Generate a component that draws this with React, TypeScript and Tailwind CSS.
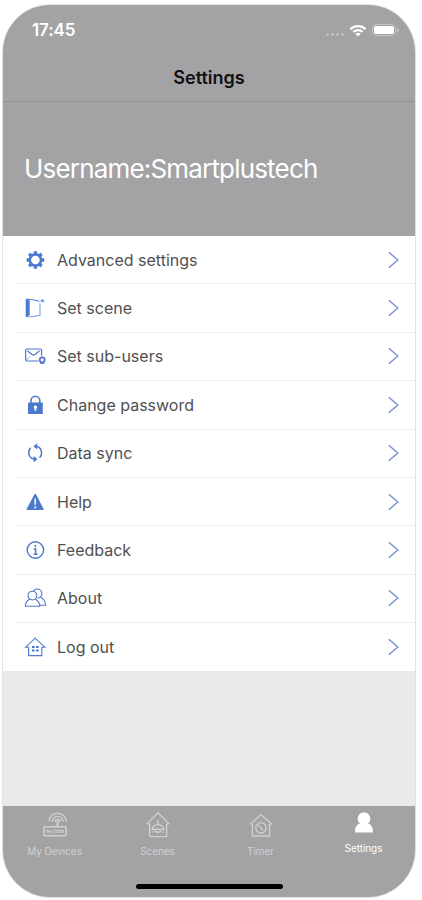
import type { ReactNode } from 'react';

const GearIcon = () => (
    <svg viewBox="0 0 24 24" className="w-6 h-6" fill="none" stroke="currentColor">
        <circle cx="12.4" cy="12" r="5.6" strokeWidth="2.6" />
        <g strokeWidth="3.4">
            <path d="M12.4 3.2v2.600M12.4 18.200v2.600M3.6 12h2.600M18.600 12h2.600" />
            <path d="M6.200 5.800l1.800 1.800M16.800 16.400l1.800 1.800M18.600 5.800l-1.800 1.800M8 16.400l-1.800 1.800" />
        </g>
    </svg>
);

const SceneIcon = () => (
    <svg viewBox="0 0 24 24" className="w-6 h-6" fill="none" stroke="currentColor">
        <path d="M3 3L6.400 4.600v14.600L3 21z" fill="currentColor" strokeWidth="0.6" />
        <path d="M4 3l6.400.8 5.800 1.400" strokeWidth="1" />
        <path d="M4 20.800l6-.2 7-1.400V7.600" strokeWidth="1.100" opacity="0.7" />
        <path d="M16.600 6.200l2.800-2.800 2 2.800" strokeWidth="1" opacity="0.75" />
        <path d="M18.600 3.600h1.800v2.600h-1.800z" fill="currentColor" stroke="none" opacity="0.8" />
    </svg>
);

const MailUserIcon = () => (
    <svg viewBox="0 0 24 24" className="w-6 h-6" fill="none" stroke="currentColor" strokeWidth="1.2">
        <path d="M15.500 17H4a1.400 1.400 0 0 1-1.400-1.400V6.400A1.400 1.400 0 0 1 4 5h13.200a1.400 1.400 0 0 1 1.400 1.400v5.400" />
        <path d="M4.400 6.800l4.600 3.600q1.500 1 3 0l4.600-3.600" />
        <path d="M3.400 16.200l3.600-3.800" strokeWidth="0.7" />
        <circle cx="19.200" cy="15.800" r="2.500" strokeWidth="1.700" />
        <path d="M17.400 18.400v1h3.600v-1" strokeWidth="1" />
    </svg>
);

const LockIcon = () => (
    <svg viewBox="0 0 24 24" className="w-6 h-6" fill="currentColor">
        <path d="M8 11V7.600a4.400 4.400 0 0 1 8.800 0V11" fill="none" stroke="currentColor" strokeWidth="1.6" />
        <rect x="5" y="9.600" width="14.800" height="11.400" rx="0.6" />
        <path d="M12.400 12.600a1.700 1.700 0 0 1 .8 3.200v1.900h-1.600v-1.900a1.700 1.700 0 0 1 .8-3.200z" fill="#fff" />
    </svg>
);

const SyncIcon = () => (
    <svg viewBox="0 0 24 24" className="w-6 h-6" fill="none" stroke="currentColor" strokeWidth="1.5">
        <path d="M7.600 6.800a7 7 0 0 0 .8 10.400l3.200.9" />
        <path d="M13.200 5.200l3 1.200a7 7 0 0 1 .4 10.200" />
        <path d="M10.400 5.200l3.800-3v6.400z" fill="currentColor" stroke="none" />
        <path d="M14.400 18l-3.800-3v6.400z" fill="currentColor" stroke="none" />
    </svg>
);

const WarningIcon = () => (
    <svg viewBox="0 0 24 24" className="w-6 h-6" fill="currentColor">
        <path d="M12.200 4.400l7.800 15H4.200z" stroke="currentColor" strokeWidth="1.4" strokeLinejoin="round" />
        <path d="M12.200 8.600v6.200M12.200 16.200v2.200" stroke="#fff" strokeWidth="1.8" opacity="0.85" />
    </svg>
);

const InfoIcon = () => (
    <svg viewBox="0 0 24 24" className="w-6 h-6" fill="none" stroke="currentColor">
        <circle cx="12.400" cy="12" r="8.200" strokeWidth="1.400" />
        <path d="M12.400 7v2.200M10.800 11h1.800v5M10.600 16.200h4" strokeWidth="1.500" />
    </svg>
);

const PeopleIcon = () => (
    <svg viewBox="0 0 24 24" className="w-6 h-6" fill="none" stroke="currentColor" strokeWidth="1.1">
        <circle cx="9.400" cy="9.600" r="4.400" />
        <path d="M6.600 13.200c-2.400 1.200-4.200 3.400-4.200 7h14.400c0-3.600-1.800-5.800-4.600-7" />
        <path d="M10.400 5.200a4.600 4.600 0 1 1 7.400 5.400l-3.400 2" />
        <path d="M17.400 11.200c2.800 1.200 5 3.800 5.200 8h-5.800" />
    </svg>
);

const HomeIcon = () => (
    <svg viewBox="0 0 24 24" className="w-6 h-6" fill="none" stroke="currentColor" strokeWidth="1.1">
        <path d="M5.600 12.200H2.600L12.200 3.200l9.600 9h-3v8.400H5.600z" />
        <path d="M9 11h2.600v2H9zM13 11h2.600v2H13zM9 14.400h2.600v2H9zM13 14.400h2.600v2H13z" fill="currentColor" stroke="none" />
    </svg>
);

const RouterIcon = () => (
    <svg viewBox="0 0 28 28" className="w-7 h-7" fill="none" stroke="currentColor" strokeWidth="1.4">
        <path d="M8 10.400a8.600 8.200 0 0 1 17.200 0" />
        <path d="M11 10.800a5.600 5.400 0 0 1 11.200 0" />
        <path d="M13.800 11a2.800 2.600 0 0 1 5.600 0" />
        <path d="M16.600 9.600v6.400" strokeWidth="2" />
        <rect x="3" y="15.800" width="22" height="9" rx="1" strokeWidth="1.600" />
        <path d="M6 22.400v-3.600l2.600 3.400v-3.400M11 22.400v-3.600M13.400 19.400h8.800v1.800h-8.800" strokeWidth="1" />
    </svg>
);

const LampHouseIcon = () => (
    <svg viewBox="0 0 28 28" className="w-7 h-7" fill="none" stroke="currentColor" strokeWidth="1.400">
        <path d="M5.600 13.400L3.400 12.600 14 1.800l10.800 10.800-2.200.8v11.400q0 .8-1 .8H6.600q-1 0-1-.8z" />
        <path d="M14 9v4.200M8.200 18.400c.6-3 2.800-4.800 5.800-4.800s5.200 1.800 5.800 4.800z" />
        <path d="M11 19.200c.4 2.800 5.600 2.800 6 0M9.400 20.400l-1 1M18.600 20.400l1 1" />
    </svg>
);

const ClockHouseIcon = () => (
    <svg viewBox="0 0 28 28" className="w-7 h-7" fill="none" stroke="currentColor" strokeWidth="1.3">
        <path d="M5.400 13.600L3.800 12.800 14 3.600l10.400 9.200-1.800.8V25H5.400z" />
        <circle cx="14" cy="16.800" r="5.200" />
        <path d="M11 14l5.200 5" />
    </svg>
);

const PersonIcon = () => (
    <svg viewBox="0 0 28 28" className="w-7 h-7" fill="currentColor">
        <path d="M14 3.600a6.200 6.200 0 0 1 4 11c3.400 1 5 3.800 5 8.800H5c0-5 1.600-7.800 5-8.800a6.200 6.200 0 0 1 4-11z" />
    </svg>
);

const WifiIcon = () => (
    <svg viewBox="0 0 18 13" className="w-[18px] h-[13px]" fill="none" stroke="currentColor" strokeWidth="2.3">
        <path d="M1.400 5.100a11 11 0 0 1 15.200 0" />
        <path d="M4.300 8a7 7 0 0 1 9.400 0" />
        <path d="M9 12.600L6.400 9.900a3.800 3.800 0 0 1 5.200 0z" fill="currentColor" stroke="none" />
    </svg>
);

const MENU = [
    { label: 'Advanced settings', icon: GearIcon },
    { label: 'Set scene', icon: SceneIcon },
    { label: 'Set sub-users', icon: MailUserIcon },
    { label: 'Change password', icon: LockIcon },
    { label: 'Data sync', icon: SyncIcon },
    { label: 'Help', icon: WarningIcon },
    { label: 'Feedback', icon: InfoIcon },
    { label: 'About', icon: PeopleIcon },
    { label: 'Log out', icon: HomeIcon },
];

function StatusBar() {
    return (
        <div className="flex items-center justify-between h-[50px] pl-[29px] pr-[16px] text-white">
            <span className="text-[17px] leading-5 font-semibold tracking-[-0.1px]">17:45</span>
            <div className="flex items-center">
                <div className="flex gap-[2px] mt-2 mr-[5px] opacity-30">
                    <span className="w-[3px] h-[3px] rounded-full bg-white" />
                    <span className="w-[3px] h-[3px] rounded-full bg-white" />
                    <span className="w-[3px] h-[3px] rounded-full bg-white" />
                    <span className="w-[3px] h-[3px] rounded-full bg-white" />
                </div>
                <WifiIcon />
                <div className="ml-[5px] w-[24px] h-[12px] rounded-[4px] border border-white/35 p-px">
                    <div className="h-full rounded-[2px] bg-white" />
                </div>
                <div className="ml-px w-[2px] h-[4px] rounded-r bg-white/40" />
            </div>
        </div>
    );
}

function Tab({ label, active, children }: { label: string; active?: boolean; children: ReactNode }) {
    return (
        <div className={active ? 'flex-1 flex flex-col items-center text-white' : 'flex-1 flex flex-col items-center pt-[2px] text-[#d0d0d2]'}>
            {children}
            <span className={active ? 'mt-[5px] text-[10px] leading-3 tracking-[-0.05px]' : 'mt-[6px] text-[10px] leading-3 tracking-[-0.05px]'}>{label}</span>
        </div>
    );
}

export default function App() {
    return (
        <div className="w-[422px] h-[900px] bg-white pt-1 pl-[2px] font-['Inter','Liberation_Sans',sans-serif]">
            <div className="w-[414px] h-[894px] flex flex-col rounded-[48px] overflow-hidden border border-[#e2e2e3] bg-[#eaeaea]">
                <header className="h-[97px] shrink-0 bg-[#a3a3a5] border-b border-[#929294]">
                    <StatusBar />
                    <h1 className="mt-[11px] text-center text-[18px] leading-6 font-semibold text-[#111]">Settings</h1>
                </header>

                <section className="h-[134px] shrink-0 flex items-center bg-[#a3a3a5] pl-[21px] text-white">
                    <p className="text-[26px] leading-8 tracking-[-0.82px]">Username:Smartplustech</p>
                </section>

                <ul className="shrink-0 bg-white">
                    {MENU.map((item, index) => {
                        const Icon = item.icon;
                        return (
                            <li key={item.label} className="pl-[13px]">
                                <div className={index < MENU.length - 1 ? 'flex items-center h-[48.4px] pl-[7px] pr-4 border-b border-[#eeeef0]' : 'flex items-center h-[48px] pl-[7px] pr-4'}>
                                    <span className="text-[#4d79cd]"><Icon /></span>
                                    <span className="flex-1 ml-[10px] text-[16px] leading-6 text-[#505052]">{item.label}</span>
                                    <svg viewBox="0 0 12 18" className="w-3 h-[18px] text-[#7592cf]" fill="none" stroke="currentColor" strokeWidth="1.4">
                                        <path d="M1.800 1.200L10.800 9L1.800 16.800" />
                                    </svg>
                                </div>
                            </li>
                        );
                    })}
                </ul>

                <div className="flex-1" />

                <nav className="h-[91px] shrink-0 flex flex-col bg-[#a3a3a5] pt-[3px]">
                    <div className="flex flex-1">
                        <Tab label="My Devices"><RouterIcon /></Tab>
                        <Tab label="Scenes"><LampHouseIcon /></Tab>
                        <Tab label="Timer"><ClockHouseIcon /></Tab>
                        <Tab label="Settings" active><PersonIcon /></Tab>
                    </div>
                    <div className="mb-[8px] mx-auto w-[147px] h-[5px] rounded-full bg-black" />
                </nav>
            </div>
        </div>
    );
}
